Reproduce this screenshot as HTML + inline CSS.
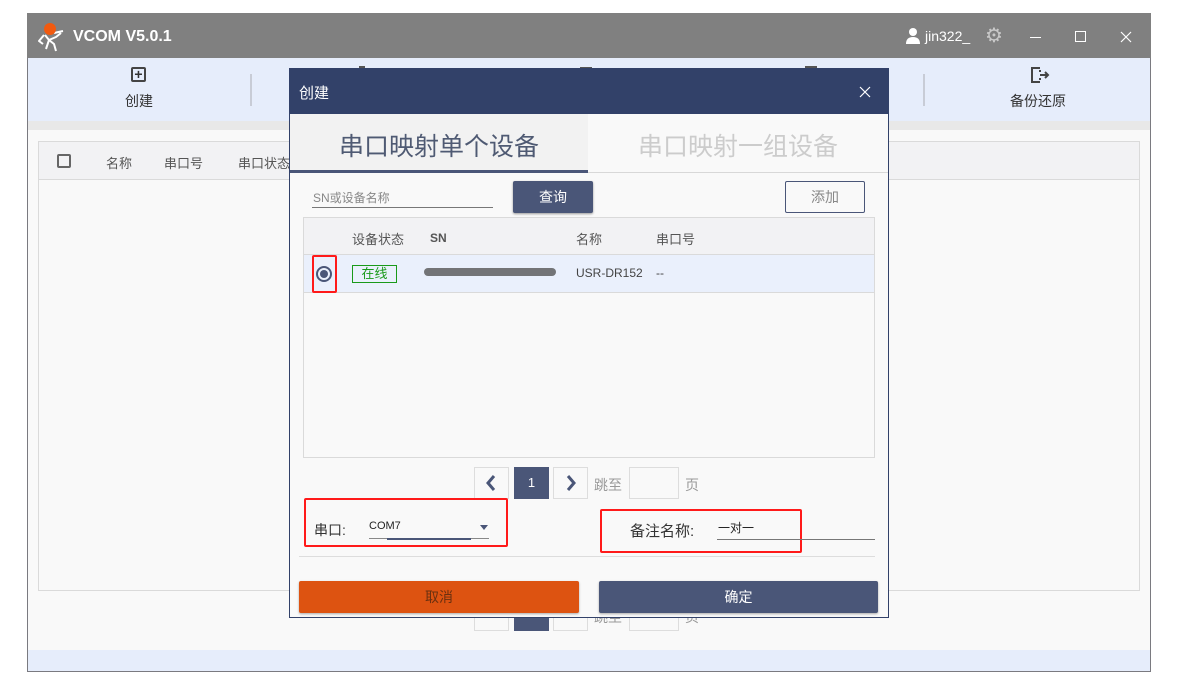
<!DOCTYPE html>
<html><head><meta charset="utf-8"><style>
*{box-sizing:border-box;margin:0;padding:0}
body{width:1190px;height:684px;background:#fff;position:relative;overflow:hidden;font-family:"Liberation Sans","Noto Sans CJK SC",sans-serif;font-size:13px;color:#333}
.a{position:absolute}
</style></head><body>
<div class="a" style="left:27px;top:13px;width:1124px;height:659px;border:1px solid #7a7a80;border-top:none;background:#f9f9f9"></div>
<div class="a" style="left:27px;top:13px;width:1124px;height:45px;background:#808080"></div>
<svg class="a" style="left:36px;top:20px" width="30" height="32" viewBox="0 0 30 32"><path d="M8 15 L3 21 L7 24 M9 15 L13 20 L10 29 M13 20 L20 17 L25 13 M13 20 L18 24 L20 31 M18 13 L27 11" stroke="#fff" stroke-width="2" fill="none" stroke-linejoin="round"/><circle cx="14" cy="9" r="6" fill="#f25a0f"/></svg>
<div class="a" style="left:73px;top:28px;color:#fff;font-size:16px;font-weight:bold">VCOM V5.0.1</div>
<svg class="a" style="left:905px;top:27px" width="16" height="17" viewBox="0 0 16 17"><circle cx="8" cy="5" r="4" fill="#fff"/><path d="M1 17 Q1 10 8 10 Q15 10 15 17Z" fill="#fff"/></svg>
<div class="a" style="left:925px;top:28px;color:#fff;font-size:14px">jin322_</div>
<div class="a" style="left:985px;top:23px;color:#c8c8c8;font-size:20px">⚙</div>
<div class="a" style="left:1030px;top:37px;width:11px;height:1px;background:#fff"></div>
<div class="a" style="left:1075px;top:31px;width:11px;height:11px;border:1px solid #fff"></div>
<svg class="a" style="left:1120px;top:31px" width="12" height="12"><path d="M1 1L11 11M11 1L1 11" stroke="#fff" stroke-width="1.2"/></svg>
<div class="a" style="left:28px;top:58px;width:1122px;height:63px;background:#e6edfb"></div>
<div class="a" style="left:28px;top:121px;width:1122px;height:9px;background:#e8e8e8"></div>
<div class="a" style="left:131px;top:67px;width:15px;height:15px;border:2px solid #444;border-radius:2px;text-align:center;line-height:10px;font-weight:bold;font-size:14px">+</div>
<div class="a" style="left:125px;top:91px;font-size:14px">创建</div>
<div class="a" style="left:250px;top:74px;width:2px;height:32px;background:#c8ccd6"></div>
<div class="a" style="left:923px;top:74px;width:2px;height:32px;background:#c8ccd6"></div>
<div class="a" style="left:359px;top:66px;width:6px;height:4px;background:#555"></div>
<div class="a" style="left:580px;top:67px;width:12px;height:3px;background:#555"></div>
<div class="a" style="left:805px;top:66px;width:12px;height:4px;background:#555"></div>
<svg class="a" style="left:1030px;top:66px" width="20" height="18" viewBox="0 0 20 18"><path d="M10 2 H2 V16 H10 M10 9 H18 M15 6 L18 9 L15 12 M10 6 V4 M10 12 V14" stroke="#444" stroke-width="2" fill="none"/></svg>
<div class="a" style="left:1010px;top:91px;font-size:14px">备份还原</div>
<div class="a" style="left:38px;top:141px;width:1102px;height:450px;border:1px solid #dadada;background:#f9f9f9"></div>
<div class="a" style="left:39px;top:142px;width:1100px;height:38px;background:#f2f2f4;border-bottom:1px solid #dadada"></div>
<div class="a" style="left:57px;top:154px;width:14px;height:14px;border:2px solid #666;border-radius:2px"></div>
<div class="a" style="left:106px;top:153px;color:#555">名称</div>
<div class="a" style="left:164px;top:153px;color:#555">串口号</div>
<div class="a" style="left:238px;top:153px;color:#555">串口状态</div>
<!-- background pagination -->
<div class="a" style="left:474px;top:599px;width:35px;height:32px;border:1px solid #ddd"></div>
<div class="a" style="left:514px;top:599px;width:35px;height:32px;background:#4a5678"></div>
<div class="a" style="left:553px;top:599px;width:35px;height:32px;border:1px solid #ddd"></div>
<div class="a" style="left:629px;top:599px;width:50px;height:32px;border:1px solid #ddd"></div>
<div class="a" style="left:594px;top:607px;color:#999;font-size:14px">跳至</div>
<div class="a" style="left:685px;top:607px;color:#999;font-size:14px">页</div>
<div class="a" style="left:28px;top:650px;width:1122px;height:21px;background:#e6edfb"></div>
<!-- dialog -->
<div class="a" style="left:289px;top:68px;width:600px;height:550px;background:#f9f9f9;border:1px solid #324169"></div>
<div class="a" style="left:289px;top:68px;width:600px;height:46px;background:#324169"></div>
<div class="a" style="left:299px;top:82px;color:#fff;font-size:15px">创建</div>
<svg class="a" style="left:859px;top:86px" width="12" height="12"><path d="M1 1L11 11M11 1L1 11" stroke="#fff" stroke-width="1.2"/></svg>
<div class="a" style="left:290px;top:114px;width:298px;height:56px;background:#f2f2f2"></div>
<div class="a" style="left:290px;top:170px;width:298px;height:3px;background:#4a5678"></div>
<div class="a" style="left:588px;top:172px;width:300px;height:1px;background:#d8d8d8"></div>
<div class="a" style="left:339px;top:127px;font-size:25px;color:#4f5a73">串口映射单个设备</div>
<div class="a" style="left:638px;top:127px;font-size:25px;color:#ccc">串口映射一组设备</div>
<div class="a" style="left:313px;top:189px;font-size:12px;color:#888">SN或设备名称</div>
<div class="a" style="left:312px;top:207px;width:181px;height:1px;background:#777"></div>
<div class="a" style="left:513px;top:181px;width:80px;height:32px;background:#4a5678;border-radius:2px;color:#fff;font-size:14px;text-align:center;line-height:32px;box-shadow:0 1px 2px #999">查询</div>
<div class="a" style="left:785px;top:181px;width:80px;height:32px;border:1px solid #4a5678;border-radius:2px;color:#888;font-size:14px;text-align:center;line-height:30px">添加</div>
<div class="a" style="left:303px;top:217px;width:572px;height:241px;border:1px solid #dadada;background:#f9f9f9"></div>
<div class="a" style="left:304px;top:218px;width:570px;height:37px;background:#f2f2f4;border-bottom:1px solid #dadada"></div>
<div class="a" style="left:352px;top:229px;color:#555">设备状态</div>
<div class="a" style="left:430px;top:231px;color:#555;font-weight:bold;font-size:12px">SN</div>
<div class="a" style="left:576px;top:229px;color:#555">名称</div>
<div class="a" style="left:656px;top:229px;color:#555">串口号</div>
<div class="a" style="left:304px;top:255px;width:570px;height:38px;background:#eaf0fc;border-bottom:1px solid #dadada"></div>
<div class="a" style="left:312px;top:255px;width:25px;height:38px;border:2px solid #ff1a1a;border-radius:2px"></div>
<div class="a" style="left:316px;top:266px;width:16px;height:16px;border:2px solid #4a5678;border-radius:50%"></div>
<div class="a" style="left:320px;top:270px;width:8px;height:8px;background:#4a5678;border-radius:50%"></div>
<div class="a" style="left:352px;top:265px;width:45px;height:18px;border:1px solid #1a9a1a;color:#1a9a1a;text-align:center;line-height:16px">在线</div>
<div class="a" style="left:424px;top:268px;width:132px;height:8px;background:#555;border-radius:4px;opacity:.8"></div>
<div class="a" style="left:576px;top:266px;color:#444;font-size:12px">USR-DR152</div>
<div class="a" style="left:656px;top:266px;color:#444;font-size:12px">--</div>
<div class="a" style="left:474px;top:467px;width:35px;height:32px;border:1px solid #ddd;background:#f9f9f9"></div>
<svg class="a" style="left:485px;top:474px" width="12" height="18"><path d="M9 2L3 9L9 16" stroke="#4a5678" stroke-width="3" fill="none"/></svg>
<div class="a" style="left:514px;top:467px;width:35px;height:32px;background:#4a5678;color:#fff;text-align:center;line-height:32px">1</div>
<div class="a" style="left:553px;top:467px;width:35px;height:32px;border:1px solid #ddd"></div>
<svg class="a" style="left:565px;top:474px" width="12" height="18"><path d="M3 2L9 9L3 16" stroke="#4a5678" stroke-width="3" fill="none"/></svg>
<div class="a" style="left:594px;top:475px;color:#999;font-size:14px">跳至</div>
<div class="a" style="left:629px;top:467px;width:50px;height:32px;border:1px solid #ddd"></div>
<div class="a" style="left:685px;top:475px;color:#999;font-size:14px">页</div>
<div class="a" style="left:304px;top:498px;width:204px;height:49px;border:2px solid #ff1a1a;border-radius:2px"></div>
<div class="a" style="left:314px;top:520px;font-size:14px">串口:</div>
<div class="a" style="left:369px;top:520px;font-size:11px;color:#222">COM7</div>
<div class="a" style="left:480px;top:525px;border:4px solid transparent;border-top:5px solid #4a5678"></div>
<div class="a" style="left:369px;top:538px;width:120px;height:1px;background:#888"></div>
<div class="a" style="left:387px;top:538px;width:84px;height:2px;background:#4a5678"></div>
<div class="a" style="left:600px;top:509px;width:202px;height:44px;border:2px solid #ff1a1a;border-radius:2px"></div>
<div class="a" style="left:630px;top:520px;font-size:15px">备注名称:</div>
<div class="a" style="left:718px;top:519px;font-size:12px;color:#222">一对一</div>
<div class="a" style="left:717px;top:539px;width:158px;height:1px;background:#777"></div>
<div class="a" style="left:299px;top:556px;width:576px;height:1px;background:#ddd"></div>
<div class="a" style="left:299px;top:581px;width:280px;height:32px;background:#dd5311;border-radius:2px;text-align:center;line-height:32px;color:#6a3010;font-size:14px;box-shadow:0 1px 2px #aaa">取消</div>
<div class="a" style="left:599px;top:581px;width:279px;height:32px;background:#4a5678;border-radius:2px;text-align:center;line-height:32px;color:#fff;font-size:14px;box-shadow:0 1px 2px #aaa">确定</div>
</body></html>
